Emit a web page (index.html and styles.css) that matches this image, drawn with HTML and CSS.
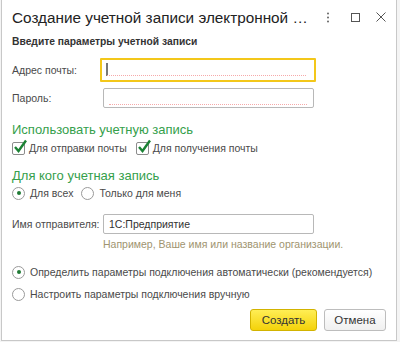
FILE: index.html
```html
<!DOCTYPE html>
<html>
<head>
    <title>Создание учетной записи</title>
    <link rel="stylesheet" href="styles.css">
</head>
<body>
    <div class="window">
        <div class="titlebar">
            <div class="title">Создание учетной записи электронной …</div>
            <div class="title-buttons">
                <svg class="icon-more" width="4" height="11" viewBox="0 0 4 11"><circle cx="2" cy="1.5" r="1" fill="#666"/><circle cx="2" cy="5.5" r="1" fill="#666"/><circle cx="2" cy="9.5" r="1" fill="#666"/></svg>
                <svg class="icon-max" width="9" height="9" viewBox="0 0 9 9"><rect x="0.5" y="0.5" width="8" height="8" fill="none" stroke="#555"/></svg>
                <svg class="icon-close" width="10" height="10" viewBox="0 0 10 10"><path d="M0.5 0.5L9.5 9.5M9.5 0.5L0.5 9.5" stroke="#555" stroke-width="1"/></svg>
            </div>
        </div>

        <div class="subtitle">Введите параметры учетной записи</div>

        <div class="row row-email">
            <div class="label">Адрес почты:</div>
            <div class="field field-focus">
                <span class="caret"></span>
                <div class="required"></div>
            </div>
        </div>

        <div class="row row-password">
            <div class="label">Пароль:</div>
            <div class="field">
                <div class="required"></div>
            </div>
        </div>

        <div class="group-title group-use">Использовать учетную запись</div>
        <div class="options options-check">
            <div class="option">
                <span class="checkbox"><svg width="16" height="15" viewBox="0 0 16 15"><path d="M3 8l3.5 4L14 1.5" fill="none" stroke="#1b8234" stroke-width="2.4"/></svg></span>
                Для отправки почты
            </div>
            <div class="option">
                <span class="checkbox"><svg width="16" height="15" viewBox="0 0 16 15"><path d="M3 8l3.5 4L14 1.5" fill="none" stroke="#1b8234" stroke-width="2.4"/></svg></span>
                Для получения почты
            </div>
        </div>

        <div class="group-title group-who">Для кого учетная запись</div>
        <div class="options">
            <div class="option"><span class="radio checked"></span>Для всех</div>
            <div class="option"><span class="radio"></span>Только для меня</div>
        </div>

        <div class="row row-sender">
            <div class="label">Имя отправителя:</div>
            <div class="field">1С:Предприятие</div>
        </div>
        <div class="hint">Например, Ваше имя или название организации.</div>

        <div class="option line-auto"><span class="radio checked"></span>Определить параметры подключения автоматически (рекомендуется)</div>
        <div class="option line-manual"><span class="radio"></span>Настроить параметры подключения вручную</div>

        <div class="buttons">
            <div class="button button-default">Создать</div>
            <div class="button button-cancel">Отмена</div>
        </div>
    </div>
</body>
</html>
```

FILE: styles.css
```css
* {
    margin: 0;
    padding: 0;
    box-sizing: border-box;
}

body {
    font-family: "Liberation Sans", Arial, sans-serif;
    font-size: 10.5px;
    background: #f4f4f4;
    color: #4a4a4a;
}

.window {
    width: 396px;
    height: 341px;
    margin-left: 1px;
    padding: 0 10px;
    background: #fff;
    border: 1px solid #c8c8c8;
    border-top: none;
}

.titlebar {
    display: flex;
    align-items: center;
    height: 34px;
}

.title {
    flex-grow: 1;
    font-size: 15.3px;
    color: #222;
    white-space: nowrap;
    padding-top: 1px;
}

.title-buttons {
    display: flex;
    align-items: center;
}

.icon-max {
    margin-left: 21px;
}

.icon-close {
    margin-left: 16px;
}

.subtitle {
    font-size: 10.3px;
    font-weight: bold;
    line-height: 16px;
    color: #333;
}

.row {
    display: flex;
    align-items: center;
}

.label {
    width: 91px;
    flex-shrink: 0;
    white-space: nowrap;
}

.field {
    position: relative;
    width: 211px;
    height: 20px;
    border: 1px solid #b8b8b8;
    border-radius: 2px;
    padding: 0 5px;
    line-height: 18px;
    color: #333;
}

.field-focus {
    width: 216px;
    height: 24px;
    margin-left: -3px;
    border: 2px solid #f3c71a;
    border-radius: 1px;
    padding: 0 6px;
}

.caret {
    position: absolute;
    left: 4px;
    top: 3px;
    width: 2px;
    height: 13px;
    background: #777;
}

.required {
    position: absolute;
    left: 5px;
    right: 6px;
    bottom: 2px;
    border-bottom: 1px dotted #f6a9a9;
}

.field-focus .required {
    bottom: 4px;
    left: 5px;
    right: 8px;
}

.row-email {
    margin-top: 8px;
    height: 24px;
}

.row-password {
    margin-top: 6px;
}

.group-title {
    font-size: 13px;
    color: #35a04b;
    line-height: 16px;
}

.group-use {
    margin-top: 14px;
}

.group-who {
    margin-top: 11px;
}

.options {
    display: flex;
    gap: 8px;
}

.options-check {
    gap: 9px;
    margin-top: 1px;
}

.option {
    display: flex;
    align-items: center;
    height: 18px;
    white-space: nowrap;
}

.checkbox {
    position: relative;
    width: 13px;
    height: 13px;
    border: 1px solid #8c8c8c;
    border-radius: 2px;
    margin-right: 4px;
    flex-shrink: 0;
}

.checkbox svg {
    position: absolute;
    left: -1px;
    top: -4px;
}

.radio {
    position: relative;
    width: 13px;
    height: 13px;
    border: 1px solid #9a9a9a;
    border-radius: 50%;
    margin-right: 5px;
    flex-shrink: 0;
}

.radio.checked:after {
    content: "";
    position: absolute;
    left: 3.5px;
    top: 3.5px;
    width: 4px;
    height: 4px;
    border-radius: 50%;
    background: #1f7a35;
}

.row-sender {
    margin-top: 12px;
}

.hint {
    margin: 2px 0 0 91px;
    color: #a09470;
    line-height: 16px;
}

.line-auto {
    margin-top: 11px;
}

.line-manual {
    margin-top: 4px;
}

.buttons {
    display: flex;
    justify-content: flex-end;
    gap: 7px;
    margin-top: 6px;
}

.button {
    height: 22px;
    line-height: 20px;
    text-align: center;
    font-size: 11.5px;
    color: #333;
    background: linear-gradient(#ffffff, #f0f0f0);
    border: 1px solid #bdbdbd;
    border-radius: 3px;
}

.button-default {
    width: 67px;
    background: linear-gradient(#ffee55, #f4d20a);
    border-color: #d2b300;
}

.button-cancel {
    width: 62px;
}
```
